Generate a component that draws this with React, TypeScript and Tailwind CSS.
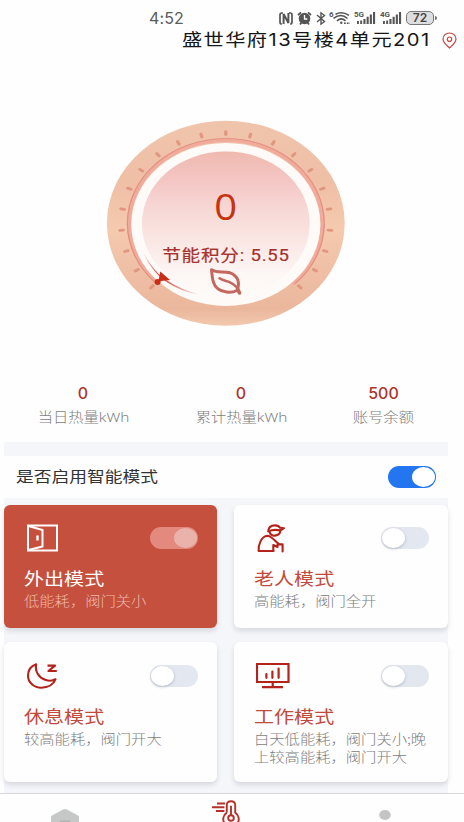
import type { ReactNode } from "react";
import clsx from "clsx";

type Mode = {
  name: string;
  desc: string;
  icon: ReactNode;
  active?: boolean;
};

const TICKS = Array.from({ length: 21 }, (_, i) => -135 + i * 13.5);

function Wide({ children, className }: { children: ReactNode; className?: string }) {
  return (
    <span className={clsx("inline-block scale-x-[1.16] whitespace-pre", className)}>
      {children}
    </span>
  );
}

function DoorIcon() {
  return (
    <svg width="34" height="28" viewBox="0 0 34 28" fill="none" stroke="white" strokeWidth="2">
      <path d="M2 1.5H31V26.5H2Z" />
      <path d="M2.5 2L16.5 6V22.5L2.5 26" />
      <path d="M11.5 11.5V16.5" strokeWidth="2.4" />
    </svg>
  );
}

function ElderIcon() {
  return (
    <svg width="34" height="30" viewBox="0 0 34 30" fill="none" stroke="#b3231c" strokeWidth="2.1" strokeLinejoin="round" strokeLinecap="round">
      <path d="M12.2 7.4C12.4 3.6 15 1.4 19 1.4C21.8 1.4 23.4 2.6 24 3.8L28 4.2L24.5 6.4Q17.5 5 12.2 7.4Z" />
      <path d="M13.6 8C14.2 10.7 16.4 11.8 19 11.6C22.3 11.4 24.3 9.4 24.3 6.6" />
      <path d="M17.5 27H2.6C2.2 20.5 5.4 12.2 11.4 11.8C14.6 11.8 18.2 16 22.6 19.8" />
      <path d="M17.3 27V21L21.5 23V20.4H26.6V27.5" />
    </svg>
  );
}

function MoonIcon() {
  return (
    <svg width="34" height="30" viewBox="0 0 34 30" fill="none" stroke="#b3231c" strokeWidth="2.1" strokeLinejoin="round">
      <path d="M10.2 2.2C5 4 2 8.4 2 13.5C2 20.6 8 25.7 15.4 25.7C22 25.7 27.7 22.5 29.5 17.2C26.5 19 23 19 19.9 18C13 16 8.7 9.5 10.2 2.2Z" />
      <path d="M21.5 3.6H29L22.5 9H30.8" strokeWidth="2.2" />
    </svg>
  );
}

function MonitorIcon() {
  return (
    <svg width="36" height="28" viewBox="0 0 36 28" fill="none" stroke="#b3231c" strokeWidth="2.2">
      <path d="M1 2H32.5V20H1ZM16.7 20V25M6 25.2H27" />
      <path d="M10.4 12V15.8M16.4 9.5V15.8M22.6 6.5V15.8" strokeLinecap="round" />
    </svg>
  );
}

const MODES: Mode[] = [
  { name: "外出模式", desc: "低能耗，阀门关小", icon: <DoorIcon />, active: true },
  { name: "老人模式", desc: "高能耗，阀门全开", icon: <ElderIcon /> },
  { name: "休息模式", desc: "较高能耗，阀门开大", icon: <MoonIcon /> },
  { name: "工作模式", desc: "白天低能耗，阀门关小;晚\n上较高能耗，阀门开大", icon: <MonitorIcon /> },
];

const STATS = [
  { value: "0", label: "当日热量kWh", box: "ml-[33px] w-[100px]" },
  { value: "0", label: "累计热量kWh", box: "ml-[58px] w-[100px]" },
  { value: "500", label: "账号余额", box: "ml-[52px] w-[81px]" },
];

function Signal({ label }: { label: string }) {
  return (
    <svg width="22" height="14" viewBox="0 0 22 14" fill="#555">
      <text x="0" y="6" fontSize="8" fontWeight="700" fontFamily="Roboto, sans-serif">
        {label}
      </text>
      <path d="M3 10h1.9v3H3zM6.2 9.5h1.9V13H6.2zM9.4 8h2.1v5H9.4zM12.6 5.7h2.1V13h-2.1zM15.8 3.4h2.1V13h-2.1zM19 1h2.1v12H19z" />
    </svg>
  );
}

function StatusBar() {
  return (
    <div className="flex h-[30px] items-start pl-[149px] pt-[9px] text-[#5b5b5b]">
      <span className="w-[130px] font-[Inter] text-[16px] leading-[19px] tracking-[0.1px]">4:52</span>
      <svg width="14" height="19" viewBox="0 0 14 19" fill="none" stroke="#555" strokeWidth="1.7">
        <path d="M4 4H2.8Q1 4 1 6V13Q1 15 2.8 15M10 4H11.2Q13 4 13 6V13Q13 15 11.2 15" />
        <path d="M4.6 15V5L9.4 14V4" strokeWidth="2" />
      </svg>
      <svg className="ml-[4px]" width="15" height="19" viewBox="0 0 15 19" fill="none">
        <path d="M1 6L4 3.3M14 6L11 3.3M3 15.5L4.5 13.5M12 15.5L10.5 13.5" stroke="#555" strokeWidth="1.8" />
        <circle cx="7.5" cy="9.5" r="5.8" fill="#555" />
        <path d="M7.5 6V10H10.3" stroke="white" strokeWidth="1.3" />
      </svg>
      <svg className="ml-[4px]" width="10" height="19" viewBox="0 0 10 19" fill="none" stroke="#555" strokeWidth="1.4">
        <path d="M1 6L8.5 12.5L5 15.2V3.8L8.5 6.5L1 13" />
      </svg>
      <svg className="ml-[3px]" width="22" height="19" viewBox="0 0 22 19" fill="none" stroke="#555" strokeWidth="1.6">
        <text x="0" y="8.3" fontSize="8" fontWeight="700" stroke="none" fill="#555" fontFamily="Roboto, sans-serif">6</text>
        <path d="M6.5 5.2Q13 1.8 20 6.3M4.5 9.4Q12 3.5 18.5 9.5M8 11.8Q12.3 8 16.5 11.8" />
        <circle cx="12.3" cy="13.7" r="1.2" fill="#555" stroke="none" />
        <path d="M15 14.3H21" strokeDasharray="1.8 1" />
      </svg>
      <div className="ml-[3px] flex gap-[4px] pt-[2px]">
        <Signal label="5G" />
        <Signal label="4G" />
      </div>
      <div className="ml-[4px] mt-[2px] flex items-center">
        <span className="flex h-[14px] w-[28px] items-center justify-center rounded-[5px] border border-[#777] bg-[#dedede] font-[Inter] text-[12px] font-semibold leading-none text-[#444]">
          72
        </span>
        <span className="ml-px h-[4px] w-[2px] rounded-r bg-[#777]" />
      </div>
    </div>
  );
}

function Gauge() {
  return (
    <div className="relative h-[330px] w-[464px]">
      <svg className="block" width="464" height="330" viewBox="0 50 464 330" fill="none">
        <defs>
          <linearGradient id="ring" x1="0" y1="0" x2="0" y2="1">
            <stop offset="0" stopColor="#f0c4ac" />
            <stop offset="0.3" stopColor="#efbfa6" />
            <stop offset="0.53" stopColor="#f5caaf" />
            <stop offset="0.75" stopColor="#efbea4" />
            <stop offset="0.92" stopColor="#eab79c" />
            <stop offset="1" stopColor="#f3c8ae" />
          </linearGradient>
          <linearGradient id="face" x1="0" y1="0" x2="0" y2="1">
            <stop offset="0" stopColor="#efb9ae" />
            <stop offset="0.2" stopColor="#f4c6c4" />
            <stop offset="0.42" stopColor="#f7d9d7" />
            <stop offset="0.65" stopColor="#fae9e6" />
            <stop offset="0.88" stopColor="#fdf8f6" />
            <stop offset="1" stopColor="#fefaf7" />
          </linearGradient>
          <linearGradient id="trail" x1="143" y1="252" x2="199" y2="295" gradientUnits="userSpaceOnUse">
            <stop offset="0" stopColor="#c9352a" stopOpacity="0" />
            <stop offset="0.4" stopColor="#c9352a" />
            <stop offset="1" stopColor="#c9352a" stopOpacity="0" />
          </linearGradient>
        </defs>
        <g transform="translate(225.8 223.2) scale(1.16 1)">
          <circle r="102.5" fill="url(#ring)" />
          <path d="M-58.7 59.7A83.5 83.5 0 1 1 58.7 59.7" stroke="#f1ab9c" strokeWidth="4" strokeLinecap="round" />
          <path d="M-59.7 60.4A84.8 84.8 0 1 1 59.7 60.4" stroke="#e08d79" strokeWidth="0.9" />
          {TICKS.map((deg) => (
            <path
              key={deg}
              d="M0 -91.6V-88.6"
              transform={`rotate(${deg})`}
              stroke="#e0977f"
              strokeWidth="2.8"
              strokeLinecap="round"
            />
          ))}
          <circle cy="1.2" r="81.5" fill="#fefaf7" />
          <circle cy="0.5" r="72.3" fill="url(#face)" />
        </g>
        <path d="M144 254Q153 271 165 279.5Q182 290.5 199 294.5Q181 291.5 167 282Q153 273 144 254Z" fill="url(#trail)" stroke="url(#trail)" strokeWidth="0.4" />
        <path d="M160.3 271.5L170 280L161 281L158 283Z" fill="#cc2d16" />
        <circle cx="157.6" cy="282" r="3" fill="#cc2d16" />
        <g stroke="#c4685f" strokeWidth="3" strokeLinecap="round" strokeLinejoin="round">
          <path d="M211.5 269.8C217 273.5 223.5 270.8 230 272.8C237.5 275.5 240.5 282 237 290.5C231 293.5 222 292.5 217 288C211.5 283 212.5 276 211.5 269.8Z" />
          <path d="M219.5 278.3C223 281 227.5 280.8 231 282.8C235.5 285 238 288 239.3 292.5" strokeWidth="2.6" />
          <path d="M237.6 289L239.5 293" strokeWidth="3.6" />
        </g>
      </svg>
      <div className="absolute inset-x-0 top-[135px] flex h-[42px] w-[452px] items-center justify-center text-[37px] text-[#c5330f]">
        <span className="font-['Open_Sans'] scale-x-[1.08]">0</span>
      </div>
      <div className="absolute inset-x-0 top-[194px] flex h-[24px] w-[452px] items-center justify-center text-[16px] text-[#a5322d]">
        <Wide className="font-[Roboto,'Noto_Sans_CJK_SC',sans-serif] tracking-[0.7px] [-webkit-text-stroke:0.2px_#a5322d]">
          节能积分: 5.55
        </Wide>
      </div>
    </div>
  );
}

function Switch({ on, blue }: { on?: boolean; blue?: boolean }) {
  return (
    <div
      className={clsx(
        "flex h-[22px] w-[48px] shrink-0 items-center rounded-full p-px",
        blue ? "bg-[#2476f0]" : on ? "bg-[#e4897d]" : "bg-[#e3e7f0]",
        on ? "justify-end" : "justify-start"
      )}
    >
      <div
        className={clsx(
          "h-[20px] w-[23px] rounded-[50%]",
          on && !blue ? "bg-[#e9b3ac]" : "bg-white",
          !on && "shadow-[0_1px_3px_rgba(60,70,100,0.3)]"
        )}
      />
    </div>
  );
}

function ModeCard({ mode, className }: { mode: Mode; className: string }) {
  return (
    <div
      className={clsx(
        "rounded-[6px] pl-[20px] shadow-[0_3px_5px_rgba(60,70,100,0.16)]",
        mode.active ? "bg-[#c5503d]" : "bg-[#fefefe]",
        className
      )}
    >
      <div className="flex h-[42px] items-start justify-between pr-[19px]">
        <div className="pl-[2px]">{mode.icon}</div>
        <div className="pt-[3px]">
          <Switch on={mode.active} />
        </div>
      </div>
      <div className={clsx("h-[23px] text-[17.3px] leading-[23px]", mode.active ? "text-white" : "text-[#c24a3c]")}>
        <Wide className="origin-left">{mode.name}</Wide>
      </div>
      <div className={clsx("mt-[3px] text-[13.2px] font-light leading-[17.5px]", mode.active ? "text-[#efb8ad]" : "text-[#7d7d7d]")}>
        <Wide className="origin-left">{mode.desc}</Wide>
      </div>
    </div>
  );
}

export default function App() {
  return (
    <div className="h-[822px] w-[464px] overflow-hidden bg-[#fefefe] font-['Noto_Sans_CJK_SC',sans-serif]">
      <StatusBar />
      <div className="flex h-[20px] items-center justify-between pl-[182px] pr-[7px]">
        <Wide className="origin-left font-[Inter,'Noto_Sans_CJK_SC',sans-serif] text-[17.4px] leading-[20px] tracking-[1.25px] text-[#161616]">
          盛世华府13号楼4单元201
        </Wide>
        <svg width="15" height="17" viewBox="0 0 15 17" fill="none" stroke="#bf4b42" strokeWidth="1.2">
          <path d="M7.5 16C4 12.8 1 10.5 1 7C1 3.4 4 1 7.5 1S14 3.4 14 7C14 10.5 11 12.8 7.5 16Z" />
          <circle cx="7.5" cy="7.2" r="2.2" />
        </svg>
      </div>
      <Gauge />

      <div className="flex h-[62px] pt-[3px]">
        {STATS.map((s) => (
          <div key={s.label} className={clsx("flex flex-col items-center", s.box)}>
            <span className="font-[Inter] text-[16px] font-medium leading-[20px] text-[#ab342c]">{s.value}</span>
            <Wide className="mt-[4px] font-['Noto_Sans','Noto_Sans_CJK_SC',sans-serif] text-[13.2px] font-light leading-[20px] text-[#7d7d7d]">
              {s.label}
            </Wide>
          </div>
        ))}
      </div>

      <div className="ml-[4px] h-[351px] w-[444px] bg-[#f5f6f9] pt-[14px]">
        <div className="flex h-[42px] items-center justify-between bg-[#fefefe] pl-[12px] pr-[12px]">
          <Wide className="relative -top-[2px] origin-left text-[15.3px] text-[#333]">是否启用智能模式</Wide>
          <Switch on blue />
        </div>
        <div className="mt-[7px] grid grid-cols-[213px_214px] gap-x-[17px] gap-y-[14px]">
          {MODES.map((m, i) => (
            <ModeCard key={m.name} mode={m} className={i < 2 ? "h-[123px] pt-[19px]" : "h-[140px] pt-[20px]"} />
          ))}
        </div>
      </div>

      <div className="flex h-[29px] items-start border-t border-[#d8d8da] bg-[#fefefe]">
        <svg className="ml-[50px] mt-[14px]" width="30" height="15" viewBox="0 0 30 15">
          <path d="M1 9Q1 8 2 7.4L13 1.4Q15 0.4 17 1.4L28 7.4Q29 8 29 9V15H1Z" fill="#c6c8c7" />
          <path d="M10 13.5H20" stroke="#b2b4b3" strokeWidth="2" />
        </svg>
        <svg className="ml-[132px] mt-[6px]" width="30" height="23" viewBox="0 0 30 23" fill="none" stroke="#b8302a" strokeWidth="1.9">
          <path d="M5 3.6H13M0 7.2H12.4M4 10.9H12.4" strokeWidth="2" />
          <path d="M14.8 12.6V5C14.8 2.6 16.4 1.2 19 1.2S23.2 2.6 23.2 5V12.6C27.2 15.4 27.4 20 25.8 23M14.8 12.6C10.8 15.4 10.6 20 12.2 23" />
          <path d="M19 5.8V15" />
          <circle cx="19" cy="18" r="2.8" />
        </svg>
        <svg className="ml-[137px] mt-[15px]" width="14" height="14" viewBox="0 0 14 14" fill="#c3c5c4">
          <ellipse cx="6" cy="6" rx="5.8" ry="5" />
          <path d="M1 14Q6 11.8 11 14Z" />
        </svg>
      </div>
    </div>
  );
}
